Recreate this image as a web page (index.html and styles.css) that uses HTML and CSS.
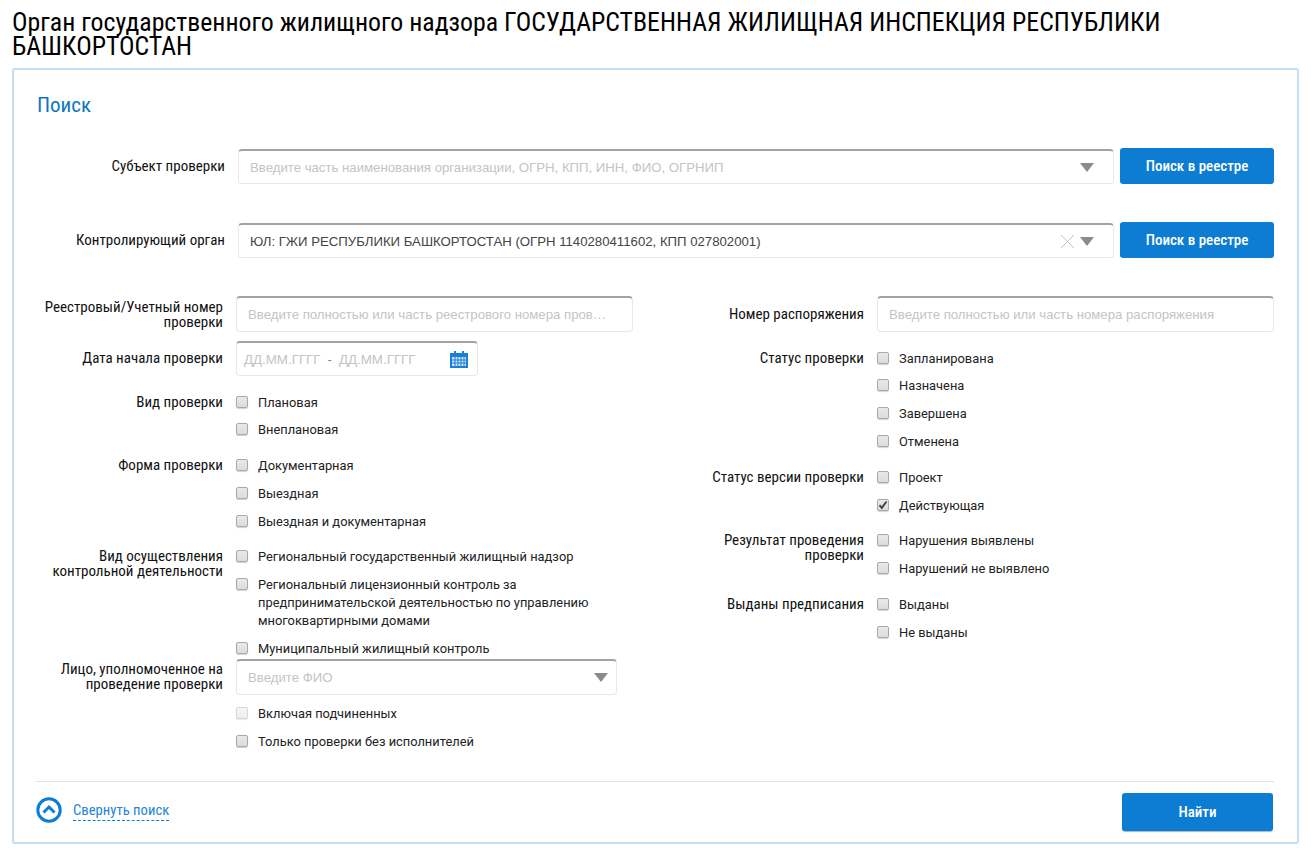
FILE: index.html
```html
<!DOCTYPE html>
<html lang="ru">
<head>
<meta charset="utf-8">
<title>Поиск</title>
<link rel="stylesheet" href="styles.css">
</head>
<body>
<h1 class="page-title">Орган государственного жилищного надзора ГОСУДАРСТВЕННАЯ ЖИЛИЩНАЯ ИНСПЕКЦИЯ РЕСПУБЛИКИ БАШКОРТОСТАН</h1>
<section class="card">
  <h2 class="card-title">Поиск</h2>
  <div class="wide-row">
    <div class="wide-label">Субъект проверки</div>
    <div class="select wide-select"><span class="placeholder">Введите часть наименования организации, ОГРН, КПП, ИНН, ФИО, ОГРНИП</span><span class="arrow"></span></div>
    <button class="btn btn-registry">Поиск в реестре</button>
  </div>
  <div class="wide-row second">
    <div class="wide-label">Контролирующий орган</div>
    <div class="select wide-select"><span class="value">ЮЛ: ГЖИ РЕСПУБЛИКИ БАШКОРТОСТАН (ОГРН 1140280411602, КПП 027802001)</span>
      <svg class="clear" width="15" height="15" viewBox="0 0 15 15"><path d="M1 1l13 13M14 1L1 14" stroke="#b9c4cc" stroke-width="1" fill="none"/></svg>
      <span class="arrow"></span></div>
    <button class="btn btn-registry">Поиск в реестре</button>
  </div>
  <div class="columns">
    <div class="col col-left">
      <div class="field">
        <div class="label label-reg">Реестровый/Учетный номер проверки</div>
        <input class="input" type="text" placeholder="Введите полностью или часть реестрового номера проверки">
      </div>
      <div class="field gap-date">
        <div class="label label-date">Дата начала проверки</div>
        <div class="date"><span>ДД.ММ.ГГГГ</span><span class="dash">-</span><span>ДД.ММ.ГГГГ</span>
          <svg class="cal" width="18" height="18" viewBox="0 0 18 18"><path d="M0 3h18v15H0z" fill="#1b7fd6"/><path d="M4 1h2v3H4zM12 1h2v3h-2z" fill="#1b7fd6"/><path d="M2 7h14v9H2z" fill="#cfe4f7"/><path d="M5 7v9M8 7v9M11 7v9M14 7v9M2 10h14M2 13h14" stroke="#1b7fd6" stroke-width="1"/></svg>
        </div>
      </div>
      <div class="field gap-a">
        <div class="label">Вид проверки</div>
        <div class="checks">
          <div class="check check-short"><span class="box"></span>Плановая</div>
          <div class="check"><span class="box"></span>Внеплановая</div>
        </div>
      </div>
      <div class="field gap-c">
        <div class="label">Форма проверки</div>
        <div class="checks">
          <div class="check"><span class="box"></span>Документарная</div>
          <div class="check"><span class="box"></span>Выездная</div>
          <div class="check"><span class="box"></span>Выездная и документарная</div>
        </div>
      </div>
      <div class="field gap-b">
        <div class="label">Вид осуществления контрольной деятельности</div>
        <div class="checks">
          <div class="check"><span class="box"></span>Региональный государственный жилищный надзор</div>
          <div class="check"><span class="box"></span><span class="multi">Региональный лицензионный контроль за предпринимательской деятельностью по управлению многоквартирными домами</span></div>
          <div class="check"><span class="box"></span>Муниципальный жилищный контроль</div>
        </div>
      </div>
      <div class="field gap-neg">
        <div class="label label-person">Лицо, уполномоченное на проведение проверки</div>
        <div class="checks">
          <div class="select fio-select"><span class="placeholder">Введите ФИО</span><span class="arrow arrow-fio"></span></div>
          <div class="check first-after"><span class="box box-disabled"></span>Включая подчиненных</div>
          <div class="check"><span class="box"></span>Только проверки без исполнителей</div>
        </div>
      </div>
    </div>
    <div class="col col-right">
      <div class="field">
        <div class="label label-order">Номер распоряжения</div>
        <input class="input" type="text" placeholder="Введите полностью или часть номера распоряжения">
      </div>
      <div class="field gap-status">
        <div class="label">Статус проверки</div>
        <div class="checks">
          <div class="check check-short"><span class="box"></span>Запланирована</div>
          <div class="check"><span class="box"></span>Назначена</div>
          <div class="check"><span class="box"></span>Завершена</div>
          <div class="check"><span class="box"></span>Отменена</div>
        </div>
      </div>
      <div class="field gap-c">
        <div class="label">Статус версии проверки</div>
        <div class="checks">
          <div class="check"><span class="box"></span>Проект</div>
          <div class="check"><span class="box box-checked"><svg width="10" height="10" viewBox="0 0 10 10"><path d="M1.5 5.2l2.3 2.6L8.5 1.5" stroke="#444" stroke-width="2" fill="none"/></svg></span>Действующая</div>
        </div>
      </div>
      <div class="field gap-b">
        <div class="label">Результат проведения проверки</div>
        <div class="checks">
          <div class="check"><span class="box"></span>Нарушения выявлены</div>
          <div class="check"><span class="box"></span>Нарушений не выявлено</div>
        </div>
      </div>
      <div class="field gap-c">
        <div class="label">Выданы предписания</div>
        <div class="checks">
          <div class="check"><span class="box"></span>Выданы</div>
          <div class="check"><span class="box"></span>Не выданы</div>
        </div>
      </div>
    </div>
  </div>
  <footer class="card-footer">
    <a class="collapse" href="#">
      <svg width="26" height="26" viewBox="0 0 26 26"><circle cx="13" cy="13" r="11.2" fill="none" stroke="#0d7dd4" stroke-width="3"/><path d="M7.5 15.5L13 10l5.5 5.5" fill="none" stroke="#0d7dd4" stroke-width="3"/></svg>
      <span class="collapse-text">Свернуть поиск</span>
    </a>
    <button class="btn btn-find">Найти</button>
  </footer>
</section>
</body>
</html>
```

FILE: styles.css
```css
* { box-sizing: border-box; }
html, body { margin: 0; padding: 0; background: #fff; }
body { width: 1313px; font-family: Roboto, "Liberation Sans", sans-serif; color: #111; overflow: hidden; }
.page-title { margin: 0; padding: 10px 100px 0 12px; font-family: "Roboto Condensed", Roboto, sans-serif; font-stretch: 75%; font-weight: 400; font-size: 25.8px; line-height: 24px; color: #000; height: 68px; }
.card { margin: 0 14px 0 12px; height: 776px; border: 2px solid #c2dff6; border-radius: 3px; padding: 0 23px 0 22px; position: relative; }
.card-title { margin: 0; padding: 22px 0 0 1px; height: 78px; font-weight: 400; font-size: 21px; line-height: 26px; color: #0d75c5; font-family: "Roboto Condensed", Roboto, sans-serif; font-stretch: 75%; }
.wide-row { display: flex; align-items: center; height: 36px; }
.wide-row.second { margin-top: 38px; }
.wide-label, .label { font-family: "Roboto Condensed", Roboto, sans-serif; font-stretch: 75%; font-size: 15px; line-height: 15px; color: #111; text-align: right; }
.wide-label { width: 189px; flex: none; margin-right: 13px; }
.select { position: relative; height: 35px; border: 1px solid #e6e8ea; border-top: 2px solid #a3a3a3; border-radius: 4px; display: flex; align-items: center; padding-left: 11px; font-family: "Liberation Sans", Arial, sans-serif; font-size: 13.2px; background: #fff; }
.wide-select { width: 876px; flex: none; margin-top: 1px; }
.placeholder { color: #c4c4c4; }
.value { color: #444; }
.arrow { position: absolute; right: 19px; top: 12px; width: 0; height: 0; border-left: 7px solid transparent; border-right: 7px solid transparent; border-top: 9px solid #8b8b8b; }
.arrow-fio { right: 8px; }
.clear { position: absolute; right: 38px; top: 9px; }
.btn { border: 0; border-radius: 3px; background: #0d7dd4; color: #fff; font-family: "Roboto Condensed", Roboto, sans-serif; font-stretch: 75%; font-weight: 500; font-size: 15px; cursor: pointer; }
.btn-registry { width: 154px; height: 36px; margin-left: 6px; flex: none; }
.columns { display: flex; margin-top: 38px; }
.col { display: flex; flex-direction: column; }
.col-left { width: 597px; }
.col-right { width: 641px; padding-left: 44px; }
.field { display: flex; }
.label { width: 187px; flex: none; margin-right: 13px; padding-top: 6px; }
.label-reg { padding-top: 4px; }
.label-person { padding-top: 3px; }
.label-date { padding-top: 10px; }
.label-order { padding-top: 11px; }
.input { display: block; width: 397px; height: 36px; border: 1px solid #e6e8ea; border-top: 2px solid #a3a3a3; border-radius: 4px; padding: 0 24px 0 11px; font: 13.2px "Liberation Sans", Arial, sans-serif; outline: none; text-overflow: ellipsis; }
.input::placeholder { color: #c4c4c4; opacity: 1; }
.gap-date { margin-top: 9px; }
.gap-a { margin-top: 13px; }
.gap-b { margin-top: 7px; }
.gap-c { margin-top: 8px; }
.gap-status { margin-top: 13px; }
.gap-neg { margin-top: -4px; }
.date { position: relative; width: 242px; height: 35px; border: 1px solid #e6e8ea; border-top: 2px solid #a3a3a3; border-radius: 4px; padding-left: 7px; display: flex; align-items: center; font-family: "Liberation Sans", Arial, sans-serif; font-size: 13.33px; color: #c4c4c4; }
.dash { margin: 0 7px; color: #888; }
.cal { position: absolute; right: 9px; top: 7px; }
.checks { flex: 1; min-width: 0; }
.check { display: flex; align-items: flex-start; min-height: 28px; padding: 5px 0; font-size: 12.87px; line-height: 18px; color: #222; }
.check-short { padding-bottom: 4px; min-height: 27px; }
.box { flex: none; width: 12px; height: 12px; margin: 2px 10px 0 0; border: 1px solid #a9a9a9; border-radius: 2px; background: linear-gradient(#e9e9e9, #dcdcdc); box-shadow: 0 1px 1px rgba(0,0,0,.18); position: relative; }
.box-disabled { opacity: .45; }
.box-checked svg { position: absolute; left: 0; top: 0; }
.multi { display: block; width: 360px; }
.fio-select { width: 381px; height: 36px; }
.first-after { margin-top: 5px; }
.card-footer { position: absolute; left: 22px; right: 23px; top: 711px; height: 63px; border-top: 1px solid #e3e3e3; display: flex; justify-content: space-between; align-items: flex-start; padding-top: 11px; }
.collapse { display: flex; align-items: center; height: 34px; text-decoration: none; }
.collapse-text { margin-left: 11px; margin-top: 2px; font-family: "Roboto Condensed", Roboto, sans-serif; font-stretch: 75%; font-size: 14.7px; color: #2585d6; border-bottom: 1px dashed #0d7dd4; line-height: 19px; }
.btn-find { width: 151px; height: 38px; box-shadow: 0 1px 1px rgba(0,0,0,.3); margin-right: 1px; }
```
